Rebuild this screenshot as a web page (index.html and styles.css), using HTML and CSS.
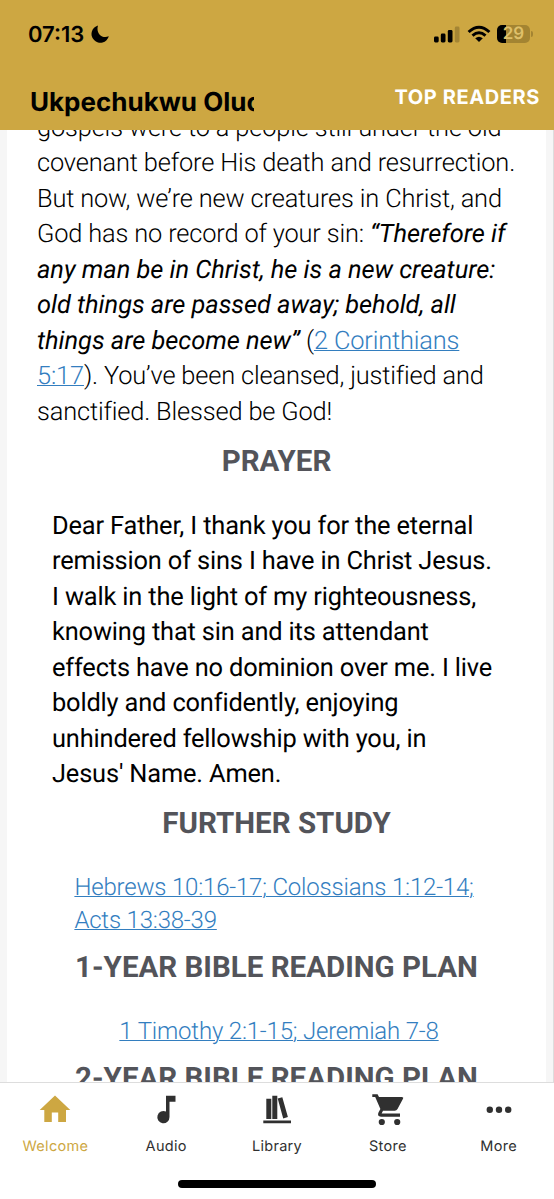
FILE: index.html
```html
<!DOCTYPE html>
<html lang="en">
  <head>
    <meta charset="UTF-8" />
    <meta name="viewport" content="width=device-width, initial-scale=1.0" />
    <title>Welcome</title>
    <link rel="stylesheet" href="styles.css" />
  </head>
  <body>
    <div class="app">
      <header class="header">
        <div class="status">
          <div class="clock">
            <span class="time">07:13</span>
            <svg class="moon" viewBox="0 0 18 18">
              <path d="M7 0.4A8.8 8.8 0 1 0 17.8 11.2C11 14.2 4.6 8.2 7 0.4Z" />
            </svg>
          </div>
          <div class="signals">
            <svg class="bars" viewBox="0 0 26 17">
              <rect x="0" y="10.5" width="4.7" height="6" rx="1.4" />
              <rect x="6.8" y="7.5" width="4.7" height="9" rx="1.4" />
              <rect x="13.8" y="4" width="4.7" height="12.5" rx="1.4" />
              <rect x="20.8" y="0.5" width="4.7" height="16" rx="1.4" opacity="0.2" />
            </svg>
            <svg class="wifi" viewBox="0 0 24 18">
              <path d="M1.6 7Q12 -2.6 22.4 7" />
              <path d="M5.5 10.6Q12 4.9 18.5 10.6" />
              <path class="dot" d="M8.2 13.3Q12 10.1 15.8 13.3L12 17Z" />
            </svg>
            <div class="battery"><span class="level">29</span></div>
          </div>
        </div>
        <div class="title-bar">
          <div class="user">Ukpechukwu Oluchi</div>
          <a class="top-readers" href="#">TOP READERS</a>
        </div>
      </header>

      <main class="content">
        <article class="card">
          <p class="text">
            gospels were to a people still under the old<br />
            covenant before His death and resurrection.<br />
            But now, we’re new creatures in Christ, and<br />
            God has no record of your sin: <em>“Therefore if<br />
            any man be in Christ, he is a new creature:<br />
            old things are passed away; behold, all<br />
            things are become new”</em> (<a href="#">2 Corinthians<br />
            5:17</a>). You’ve been cleansed, justified and<br />
            sanctified. Blessed be God!
          </p>
          <h2>PRAYER</h2>
          <p class="prayer">
            Dear Father, I thank you for the eternal<br />
            remission of sins I have in Christ Jesus.<br />
            I walk in the light of my righteousness,<br />
            knowing that sin and its attendant<br />
            effects have no dominion over me. I live<br />
            boldly and confidently, enjoying<br />
            unhindered fellowship with you, in<br />
            Jesus' Name. Amen.
          </p>
          <h2>FURTHER STUDY</h2>
          <p class="verses further">
            <a href="#">Hebrews 10:16-17; Colossians 1:12-14;<br />Acts 13:38-39</a>
          </p>
          <h2>1-YEAR BIBLE READING PLAN</h2>
          <p class="verses plan">
            <a href="#">1 Timothy 2:1-15; Jeremiah 7-8</a>
          </p>
          <h2>2-YEAR BIBLE READING PLAN</h2>
        </article>
      </main>

      <nav class="tabs">
        <a class="tab active" href="#">
          <svg viewBox="0 0 36 36">
            <path d="M18 3.5L33.3 18H29V30H21.2V20.5H14.8V30H7.3V18H2.7Z" />
          </svg>
          Welcome
        </a>
        <a class="tab" href="#">
          <svg viewBox="0 0 36 36">
            <path d="M18 3.8H27.5V9.7H21.5V25A6.1 6.1 0 1 1 18 19.6Z" />
          </svg>
          Audio
        </a>
        <a class="tab" href="#">
          <svg viewBox="0 0 36 36">
            <path d="M7.3 6.8H12.3V27H7.3ZM13.3 3.8H18.3V27H13.3ZM18.7 6.4L23.3 5.2L28.9 25L24.2 26.4ZM4.3 28.5H32V31.3H4.3Z" />
          </svg>
          Library
        </a>
        <a class="tab" href="#">
          <svg viewBox="0 0 36 36">
            <path d="M2.3 2.2H7.6L9 4.9H31.8Q33.8 4.9 33 6.8L27.5 17Q26.6 18.7 24.7 18.7H13L11.6 21.6H30V24.7H11Q6.7 24.2 8.6 20.2L10.4 17L5.2 5.1H2.3Z" />
            <circle cx="11.8" cy="30" r="3.1" />
            <circle cx="27.2" cy="30" r="3.1" />
          </svg>
          Store
        </a>
        <a class="tab" href="#">
          <svg viewBox="0 0 36 36">
            <circle cx="8.8" cy="17.7" r="3.2" />
            <circle cx="18" cy="17.7" r="3.2" />
            <circle cx="27.2" cy="17.7" r="3.2" />
          </svg>
          More
        </a>
      </nav>
      <div class="home-bar"></div>
    </div>
  </body>
</html>
```
FILE: styles.css
```css
* {
  margin: 0;
  padding: 0;
  box-sizing: border-box;
}
a {
  text-decoration: none;
}
.app {
  width: 554px;
  height: 1199px;
  display: flex;
  flex-direction: column;
  overflow: hidden;
  background-color: #fff;
  font-family: Inter, "Liberation Sans", sans-serif;
  text-rendering: geometricPrecision;
}

/* header */
.header {
  height: 130px;
  flex: none;
  background-color: #cda742;
}
.status {
  height: 68px;
  padding: 0 21px 0 28px;
  display: flex;
  justify-content: space-between;
  align-items: center;
}
.clock {
  display: flex;
  align-items: center;
  gap: 6px;
}
.time {
  width: 57px;
  padding-top: 1px;
  font-size: 22px;
  font-weight: 600;
}
.moon {
  width: 18px;
  height: 18px;
}
.signals {
  display: flex;
  align-items: center;
}
.bars {
  width: 26px;
  height: 17px;
}
.wifi {
  width: 24px;
  height: 18px;
  margin: 0 6px 0 7px;
  fill: none;
  stroke: #000;
  stroke-width: 3;
}
.wifi .dot {
  fill: #000;
  stroke: none;
}
.battery {
  width: 33px;
  height: 18px;
  border-radius: 5px;
  background: linear-gradient(to right, #000 9px, #a38432 9px);
  text-align: center;
  position: relative;
  margin-right: 3px;
}
.battery::after {
  content: "";
  position: absolute;
  right: -3px;
  top: 6px;
  width: 2px;
  height: 6px;
  border-radius: 0 2px 2px 0;
  background-color: #a38432;
}
.level {
  display: block;
  font-size: 17px;
  line-height: 18px;
  font-weight: 600;
  color: #dfc06a;
}
.title-bar {
  height: 62px;
  padding: 0 14px 0 30px;
  display: flex;
  justify-content: space-between;
}
.user {
  width: 224px;
  overflow: hidden;
  white-space: nowrap;
  font-size: 26px;
  line-height: 32px;
  padding-top: 19px;
  font-weight: 700;
}
.top-readers {
  font-size: 20px;
  line-height: 24px;
  padding-top: 17px;
  font-weight: 700;
  letter-spacing: 0.6px;
  white-space: nowrap;
  color: #fff;
}

/* article */
.content {
  height: 952px;
  flex: none;
  overflow: hidden;
  padding: 0 7px;
  background-color: #f6f6f6;
  border-right: 1px solid #ddd;
}
.card {
  height: 952px;
  overflow: hidden;
  background-color: #fff;
  font-family: Roboto, sans-serif;
  font-size: 25.4px;
  line-height: 35.43px;
  letter-spacing: -0.16px;
  white-space: nowrap;
}
.card a {
  color: #337ebf;
  text-decoration: underline;
  text-decoration-thickness: 1px;
}
.text {
  margin-top: -19px;
  padding-left: 30px;
  font-weight: 300;
}
.text em {
  font-weight: 400;
  letter-spacing: -0.03px;
}
.card h2 {
  font-size: 29.5px;
  line-height: 32px;
  margin: 16px 0 31px;
  font-weight: 700;
  letter-spacing: 0;
  text-align: center;
  color: #53545a;
}
.prayer {
  padding-left: 45px;
}
.verses {
  width: max-content;
  margin: 0 auto;
  font-size: 24px;
  line-height: 32.3px;
  font-weight: 300;
  letter-spacing: -0.19px;
}
.further {
  padding-right: 5px;
}
.plan {
  padding-left: 5px;
}

/* bottom tabs */
.tabs {
  height: 98px;
  flex: none;
  display: flex;
  border-top: 1px solid #ddd;
}
.tab {
  flex: 1;
  display: flex;
  flex-direction: column;
  align-items: center;
  padding-top: 9px;
  gap: 9px;
  font-size: 14.5px;
  line-height: 20px;
  letter-spacing: 0.3px;
  color: #303030;
}
.tab svg {
  width: 36px;
  height: 36px;
  fill: currentColor;
}
.tab.active {
  color: #cda742;
}
.home-bar {
  width: 198px;
  height: 8px;
  margin: 0 auto;
  border-radius: 4px;
  background-color: #000;
}
```
